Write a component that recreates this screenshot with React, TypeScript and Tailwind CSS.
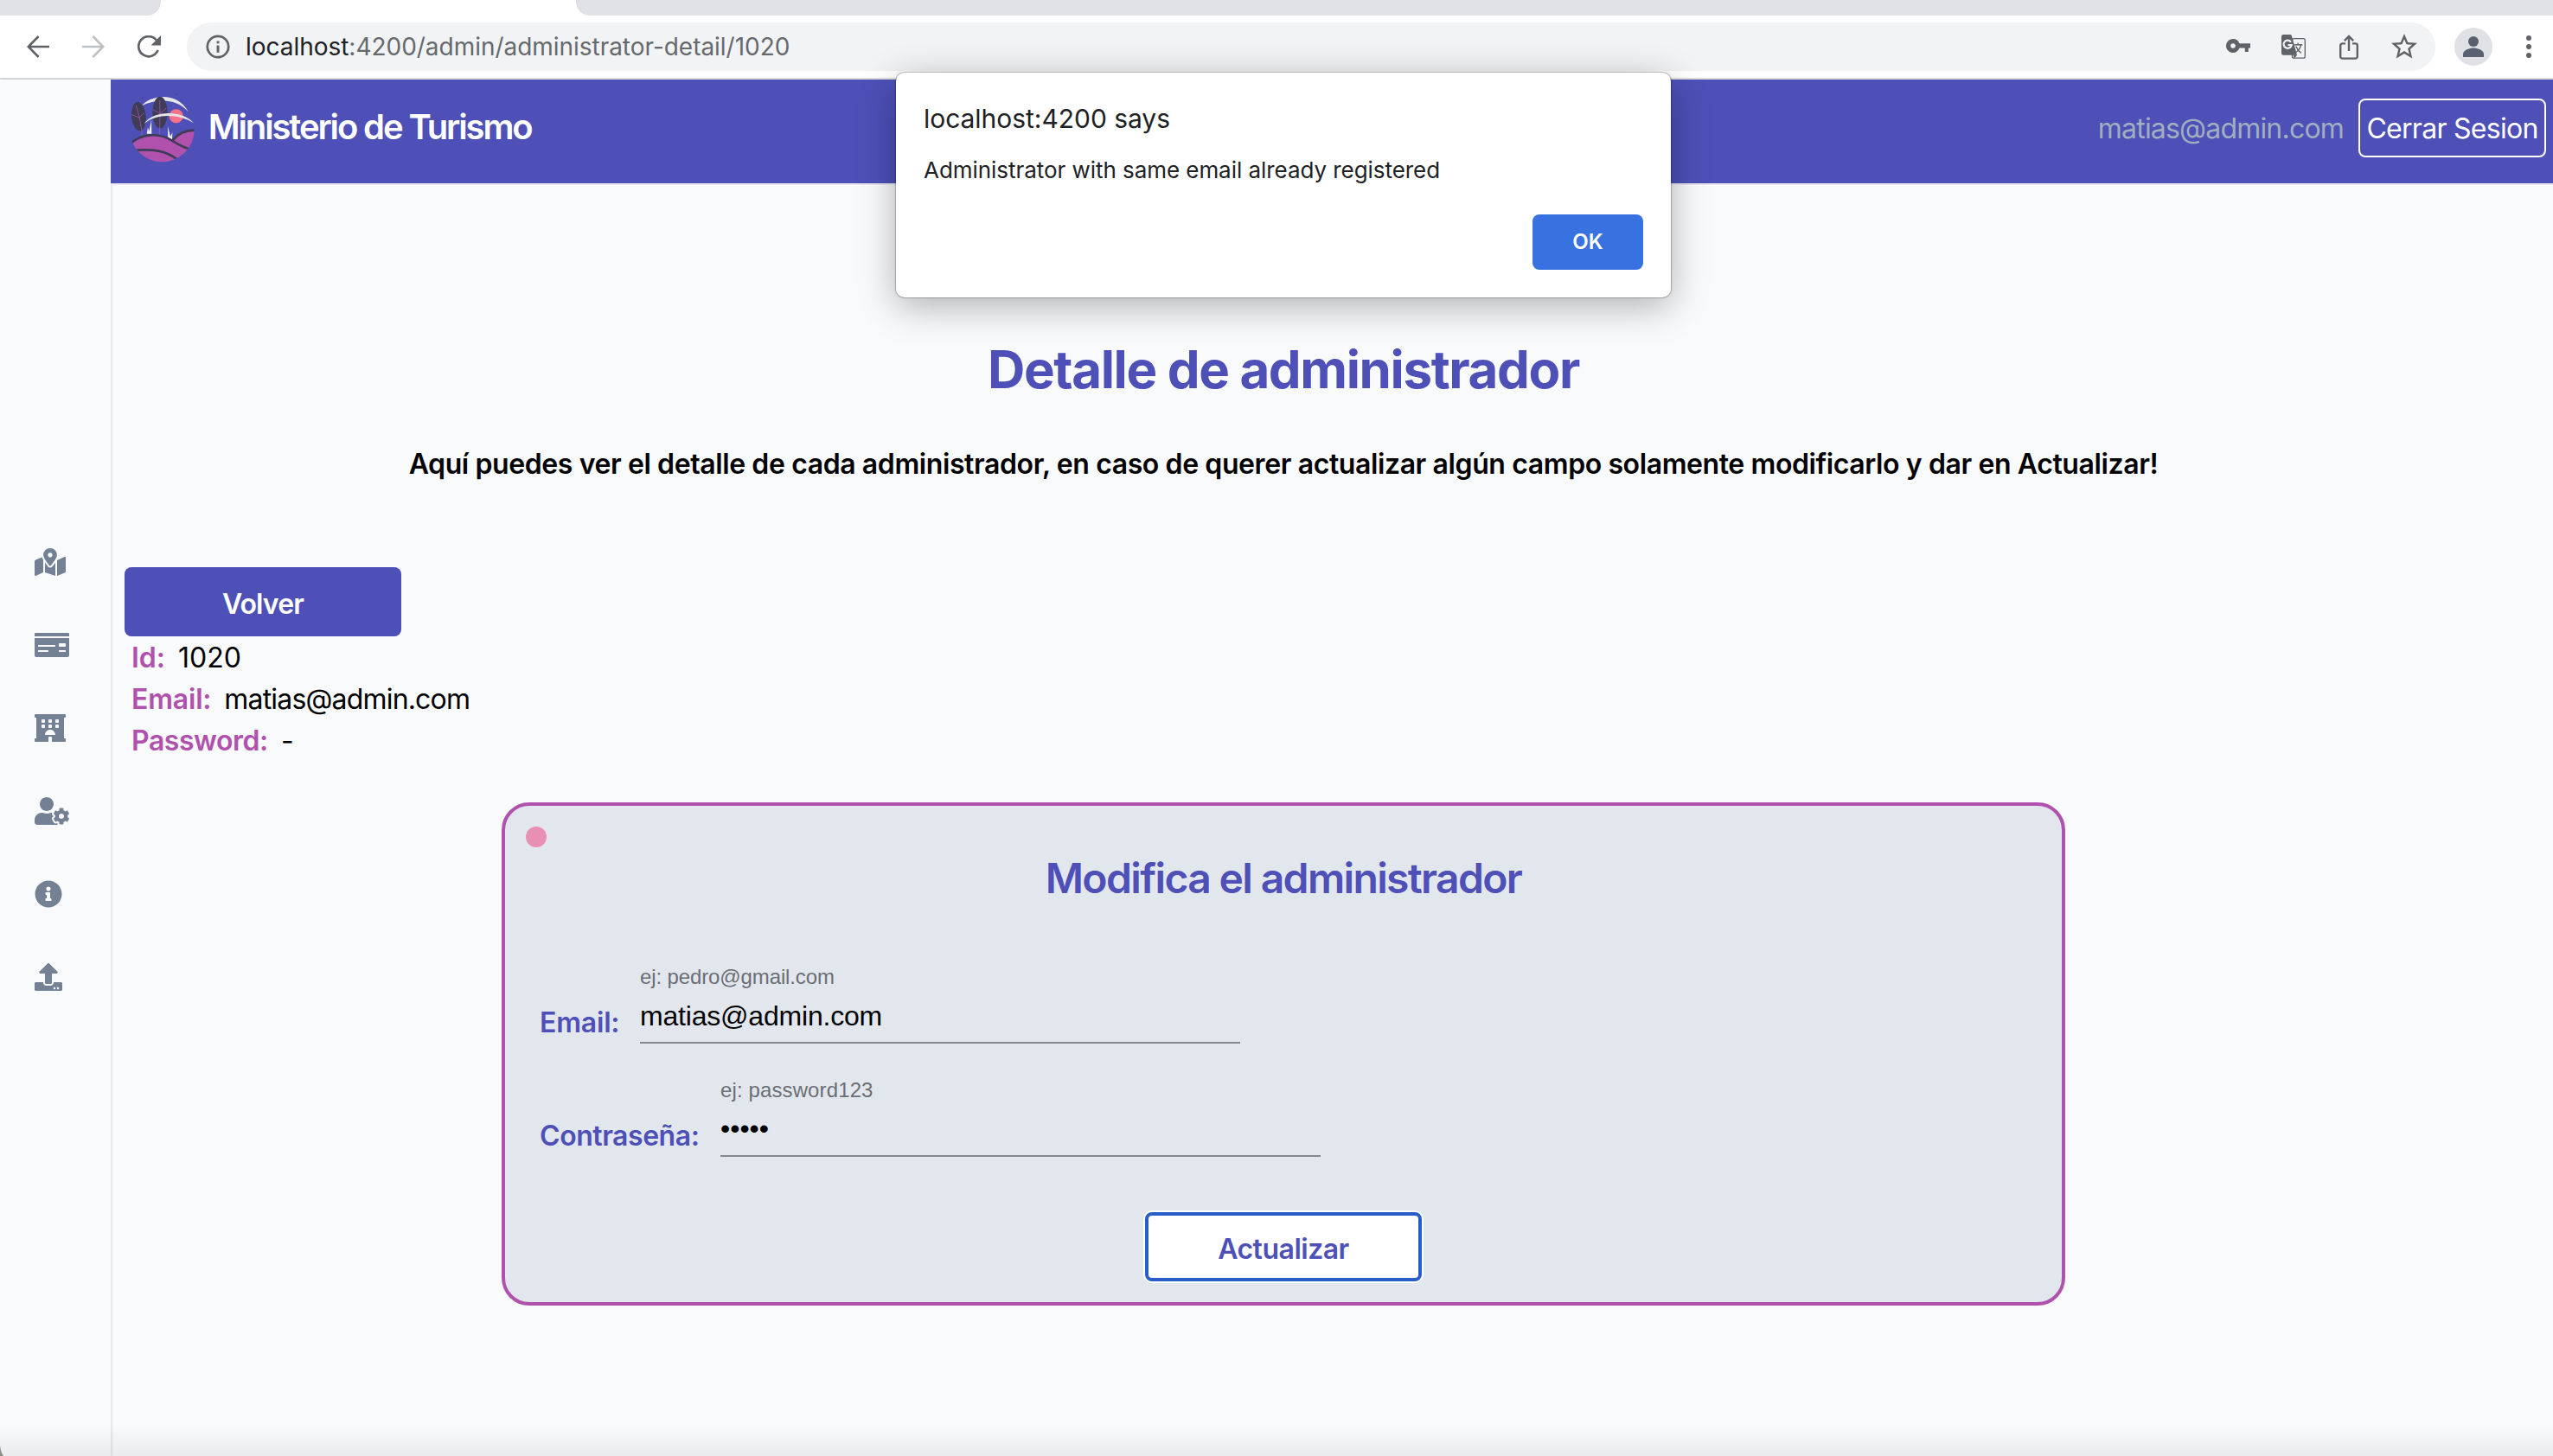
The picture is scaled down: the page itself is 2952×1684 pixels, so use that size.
import type { ReactNode } from 'react';
import {
  FaHotel,
  FaInfoCircle,
  FaMapMarkedAlt,
  FaMoneyCheck,
  FaUpload,
  FaUserCog,
} from 'react-icons/fa';

function TabStrip() {
  return (
    <div className="flex h-[18px] justify-between bg-white">
      <div className="w-[186px] rounded-br-[16px] bg-[#dfe1e5]" />
      <div className="w-[2286px] rounded-bl-[16px] bg-[#dfe1e5]" />
    </div>
  );
}

function BackArrow({ className }: { className: string }) {
  return (
    <svg viewBox="0 0 26 26" className={className} fill="none" stroke="currentColor" strokeWidth="2.6">
      <path d="M26 13H2.2M13.6 1L1.8 13l11.8 12" />
    </svg>
  );
}

function ReloadIcon() {
  return (
    <svg viewBox="0 0 27 27" className="ml-[38px] h-[27px] w-[27px] text-[#5f6368]">
      <path d="M23.6 17A11.6 11.6 0 1 1 22 5.5" fill="none" stroke="currentColor" strokeWidth="2.7" />
      <path d="M27 0v11.4H15.6z" fill="currentColor" />
    </svg>
  );
}

function InfoIcon() {
  return (
    <svg viewBox="0 0 28 28" className="ml-[22px] h-7 w-7 text-[#5f6368]">
      <circle cx="14" cy="14" r="12.2" fill="none" stroke="currentColor" strokeWidth="2.7" />
      <path d="M12.6 7.4h2.9v2.9h-2.9zM12.6 12.6h2.9v8.2h-2.9z" fill="currentColor" />
    </svg>
  );
}

function KeyIcon() {
  return (
    <svg viewBox="0 0 28 16" className="mb-[2px] h-4 w-7" fill="currentColor">
      <path
        fillRule="evenodd"
        d="M8 0a8 8 0 0 1 7.5 5.2H28v5.4h-2.2V15h-4v-4.4h-6.3A8 8 0 1 1 8 0zm0 5.2a2.8 2.8 0 1 0 0 5.6 2.8 2.8 0 0 0 0-5.6z"
      />
    </svg>
  );
}

function TranslateIcon() {
  return (
    <svg viewBox="0 0 28 28" className="ml-9 h-7 w-7">
      <rect x="12.5" y="4.6" width="14.8" height="22.6" rx="2" fill="none" stroke="#5f6368" strokeWidth="1.3" />
      <path d="M2.2 0H10a2 2 0 0 1 1.9 1.4L18 23.8H2.2A2.2 2.2 0 0 1 0 21.6V2.2A2.2 2.2 0 0 1 2.2 0z" fill="#5f6368" />
      <path d="M13.5 23.5h4.7l-3.2 4z" fill="#5f6368" />
      <path d="M11 8.6A4.600 4.600 0 1 0 11.7 12H7.4" fill="none" stroke="#f1f3f4" strokeWidth="2.2" />
      <path
        d="M14.8 11.7h9.5M19.2 9.6v2M22.6 11.7c-.8 4-3 7-5.6 8.8M16.8 13.5c1 3 3.2 5.8 6 8"
        fill="none"
        stroke="#5f6368"
        strokeWidth="1.4"
      />
    </svg>
  );
}

function ShareIcon() {
  return (
    <svg viewBox="0 0 22 29" className="ml-[39px] h-[29px] w-[22px]" fill="none" stroke="currentColor" strokeWidth="2.4">
      <path d="M7 10.4H3.4A2.2 2.2 0 0 0 1.2 12.6v12.8a2.2 2.2 0 0 0 2.2 2.2h15.2a2.2 2.2 0 0 0 2.2-2.2V12.6a2.2 2.2 0 0 0-2.2-2.2H15" />
      <path d="M11 19V2.4M5.8 7.2L11 2l5.2 5.2" />
    </svg>
  );
}

function StarIcon() {
  return (
    <svg viewBox="2 2 20 19" className="ml-[38px] mb-[1px] h-[28.5px] w-[30px]" fill="currentColor">
      <path d="M22 9.24l-7.19-.62L12 2 9.19 8.63 2 9.24l5.46 4.73L5.82 21 12 17.27 18.18 21l-1.63-7.03L22 9.24zM12 15.4l-3.76 2.27 1-4.28-3.32-2.88 4.38-.38L12 6.1l1.71 4.04 4.38.38-3.32 2.88 1 4.28L12 15.4z" />
    </svg>
  );
}

function Toolbar() {
  return (
    <div className="flex h-[74px] items-center border-b-2 border-[#dadcde] bg-white pl-[31px]">
      <BackArrow className="h-[26px] w-[26px] text-[#5f6368]" />
      <BackArrow className="ml-[38px] h-[26px] w-[26px] rotate-180 text-[#bdbfc1]" />
      <ReloadIcon />
      <div className="ml-[30px] flex h-14 w-[2600px] items-center rounded-full bg-[#f1f3f4] pr-[21px]">
        <InfoIcon />
        <div className="ml-[18px] flex-1 text-[28px] leading-8 tracking-[-0.03px] text-[#66696d]">
          <span className="text-[#202124]">localhost</span>:4200/admin/administrator-detail/1020
        </div>
        <div className="flex items-center text-[#5f6368]">
          <KeyIcon />
          <TranslateIcon />
          <ShareIcon />
          <StarIcon />
        </div>
      </div>
      <div className="ml-[22px] flex h-11 w-11 items-center justify-center rounded-full bg-[#dfe1e5]">
        <svg viewBox="0 0 24 24" className="h-6 w-6" fill="#5a6070">
          <circle cx="12" cy="6" r="6" />
          <path d="M0 24v-3.5C0 16 8 13.6 12 13.6S24 16 24 20.5V24z" />
        </svg>
      </div>
      <svg viewBox="0 0 6 26" className="ml-[39px] h-[26px] w-[6px]" fill="#5f6368">
        <circle cx="3" cy="3" r="3" />
        <circle cx="3" cy="13" r="3" />
        <circle cx="3" cy="23" r="3" />
      </svg>
    </div>
  );
}

function Sidebar() {
  return (
    <aside className="flex w-[128px] flex-col gap-16 pt-[542px] pl-10 text-[#748194] shadow-[1px_0_3px_rgba(0,0,0,0.14)]">
      <FaMapMarkedAlt className="h-8 w-9" />
      <FaMoneyCheck className="h-8 w-10" />
      <FaHotel className="h-8 w-9" />
      <FaUserCog className="h-8 w-10" />
      <FaInfoCircle className="h-8 w-8" />
      <FaUpload className="h-8 w-8" />
    </aside>
  );
}

function Logo() {
  return (
    <svg viewBox="60 50 230 250" className="h-[83.3px] w-[76.7px]">
      <defs>
        <clipPath id="disc">
          <circle cx="172" cy="182" r="112" />
        </clipPath>
      </defs>
      <path d="M101 99C135 60 225 48 264 121 225 75 160 72 101 99z" fill="#e6e6e6" />
      <circle cx="221" cy="135" r="24.5" fill="#f57288" />
      <path d="M119 196l4-22 4 14 8-40 1 48zM193 218l-1-48 9 36 7-14-1 26z" fill="#f2f2f2" />
      <ellipse cx="91" cy="136" rx="25" ry="50" transform="rotate(-5 91 136)" fill="#3f3d56" />
      <ellipse cx="165" cy="122" rx="26" ry="55" fill="#3f3d56" />
      <g fill="none" stroke="#b052ad" strokeWidth="2.2">
        <path d="M82 98l11 38 7 40 4 38M67 130l26 10 18-17M164 80l1 48-2 82M141 112l24 15 22-20" />
      </g>
      <path d="M110 161C140 115 240 112 282 159 235 128 155 122 110 161z" fill="#e6e6e6" />
      <g clipPath="url(#disc)">
        <path d="M205 222C230 190 255 183 290 182v100l-60-20z" fill="#b052ad" />
        <path d="M207 222C230 192 255 184 290 184" fill="none" stroke="#3f3d56" strokeWidth="8" />
        <path d="M60 235C110 190 165 192 210 225c20 13 35 21 55 25v50H60z" fill="#b052ad" />
        <path d="M60 232C100 196 160 190 207 220c20 13 35 22 60 29" fill="none" stroke="#3f3d56" strokeWidth="8" />
        <path d="M80 253c65-3 100 0 145 32" fill="none" stroke="#3f3d56" strokeWidth="8" />
      </g>
      <path d="M99 71l4 3 5-6-2 6-4 2zM219 57l4 2 5-1-4 3zM197 98l4 2 4-4-2 6z" fill="#3f3d56" />
    </svg>
  );
}

function Header() {
  return (
    <header className="flex h-[122px] items-center justify-between border-b-2 border-[#e9eaf0] bg-[#4e50b8] pr-2 pb-2 pl-[22px]">
      <div className="flex items-center">
        <Logo />
        <span className="ml-[14px] pb-[2px] text-[40px] leading-[48px] font-semibold tracking-[-2.13px] text-white">
          Ministerio de Turismo
        </span>
      </div>
      <div className="flex items-center">
        <span className="pt-[2px] text-[32px] leading-[48px] tracking-[-0.8px] text-[#a0aec0]">matias@admin.com</span>
        <button className="ml-[17px] h-[68px] w-[217px] rounded-lg border-2 border-white pt-[2px] text-[32px] leading-[48px] tracking-[-0.72px] whitespace-nowrap text-white">
          Cerrar Sesion
        </button>
      </div>
    </header>
  );
}

function Detail({ name, children }: { name: ReactNode; children: ReactNode }) {
  return (
    <div className="flex gap-[15px]">
      <dt className="font-semibold text-[#b052ad]">{name}</dt>
      <dd className="text-black">{children}</dd>
    </div>
  );
}

function EditCard() {
  return (
    <section className="mx-auto mt-[47px] h-[582px] w-[1808px] rounded-[32px] border-4 border-[#b052ad] bg-[#e2e7ee] pt-6">
      <div className="ml-6 h-6 w-6 rounded-full bg-[#e88fb3]" />
      <h2 className="mt-[6px] text-center text-[48px] leading-[60px] font-semibold tracking-[-1.64px] text-[#4e50b8]">
        Modifica el administrador
      </h2>
      <form className="mt-[70px] flex flex-col gap-10 pl-10">
        <div className="flex items-end">
          <label className="w-[116px] text-[32px] leading-[48px] font-semibold tracking-[-0.2px] text-[#4e50b8]">
            Email:
          </label>
          <div className="w-[694px] border-b-2 border-[#85898d] pb-3 font-['Liberation_Sans',sans-serif]">
            <div className="text-[24px] leading-7 tracking-[-0.12px] text-[#6b6e73]">ej: pedro@gmail.com</div>
            <div className="mt-[13px] text-[32px] leading-9 tracking-[-0.2px] text-black">matias@admin.com</div>
          </div>
        </div>
        <div className="flex items-end">
          <label className="w-[209px] text-[32px] leading-[48px] font-semibold tracking-[-0.45px] text-[#4e50b8]">
            Contraseña:
          </label>
          <div className="w-[694px] border-b-2 border-[#85898d] pb-[13px] font-['Liberation_Sans',sans-serif]">
            <div className="text-[24px] leading-7 tracking-[0.12px] text-[#6b6e73]">ej: password123</div>
            <div className="mt-3 text-[32px] leading-9 text-black">•••••</div>
          </div>
        </div>
      </form>
      <div className="mt-[62px] flex justify-center">
        <div className="h-[84px] w-[324px] rounded-[10px] bg-white p-[2px]">
          <button className="h-20 w-80 rounded-lg border-4 border-[#265dc6] bg-white pt-[5px] text-[32px] leading-[48px] font-semibold tracking-[-0.5px] text-[#4e50b8]">
            Actualizar
          </button>
        </div>
      </div>
    </section>
  );
}

function AlertDialog() {
  return (
    <div
      role="alertdialog"
      className="absolute top-[84px] left-[1036px] flex h-[260px] w-[896px] flex-col rounded-[10px] bg-white pt-[35px] pr-8 pl-8 text-[#202124] shadow-[0_0_1px_1px_rgba(0,0,0,0.24),0_10px_44px_rgba(0,0,0,0.3)]"
    >
      <div className="text-[30px] leading-9 tracking-[-0.04px]">localhost:4200 says</div>
      <div className="mt-[26px] text-[26px] leading-8 tracking-[-0.05px]">
        Administrator with same email already registered
      </div>
      <button className="mt-[35px] h-16 w-32 self-end rounded-lg bg-[#3871e0] text-[24px] leading-8 font-semibold text-white">
        OK
      </button>
    </div>
  );
}

export default function App() {
  return (
    <div className="relative flex h-[1684px] w-[2952px] flex-col overflow-hidden bg-[#f9fafc] font-['Inter',sans-serif]">
      <TabStrip />
      <Toolbar />
      <div className="flex flex-1">
        <Sidebar />
        <div className="flex flex-1 flex-col">
          <Header />
          <main className="flex-1 pt-[177px] pr-28">
            <h1 className="text-center text-[60px] leading-[72px] font-bold tracking-[-1.36px] text-[#4e50b8]">
              Detalle de administrador
            </h1>
            <p className="mt-[50px] text-center text-[32px] leading-[48px] font-semibold tracking-[-0.4px] text-black">
              Aquí puedes ver el detalle de cada administrador, en caso de querer actualizar algún campo solamente
              modificarlo y dar en Actualizar!
            </p>
            <button className="mt-[95px] ml-4 block h-20 w-80 rounded-lg bg-[#4e50b8] pt-[5px] text-[32px] leading-[48px] font-semibold tracking-[-0.9px] text-white">
              Volver
            </button>
            <dl className="pt-[1px] pl-6 text-[32px] leading-[48px]">
              <Detail name="Id:">1020</Detail>
              <Detail name={<span className="tracking-[-0.2px]">Email:</span>}>
                <span className="tracking-[-0.82px]">matias@admin.com</span>
              </Detail>
              <Detail name={<span className="tracking-[-0.45px]">Password:</span>}>-</Detail>
            </dl>
            <EditCard />
          </main>
        </div>
      </div>
      <AlertDialog />
      <div className="pointer-events-none absolute inset-x-0 bottom-0 h-9 bg-linear-to-b from-transparent to-black/6" />
      <svg viewBox="0 0 4 12" className="absolute bottom-0 left-0 h-3 w-1">
        <path d="M0 0q1 8 4 12H0z" fill="#8d8d88" />
      </svg>
    </div>
  );
}
